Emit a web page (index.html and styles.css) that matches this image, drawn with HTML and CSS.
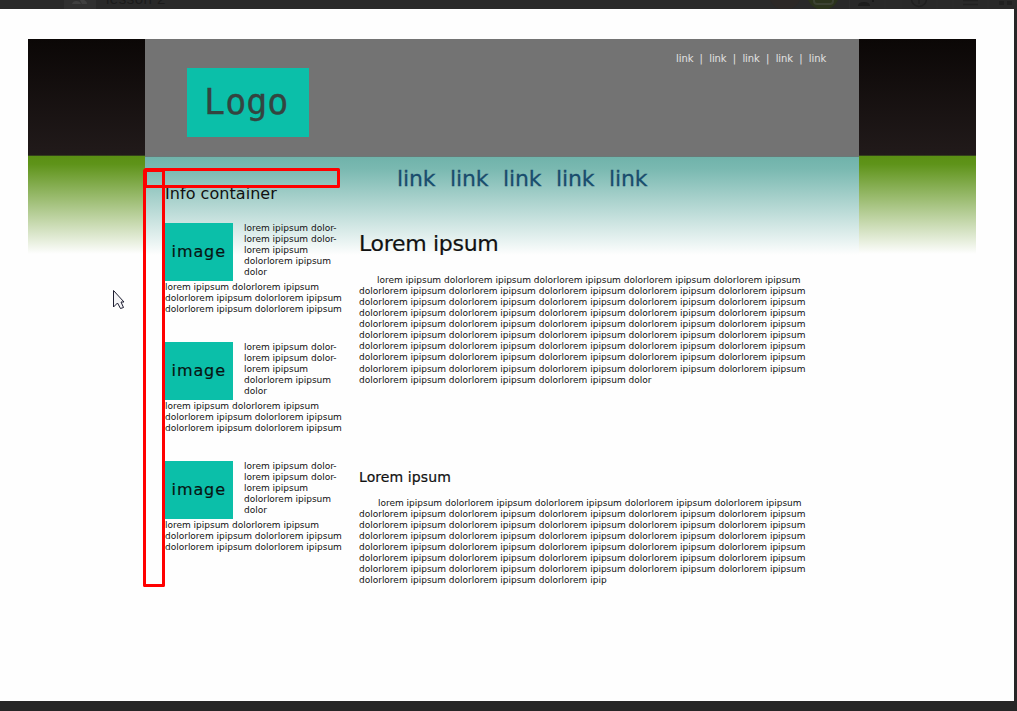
FILE: index.html
```
<!DOCTYPE html>
<html lang="en">
<head>
<meta charset="utf-8">
<title>lesson 2</title>
<link rel="stylesheet" href="styles.css">
</head>
<body>
<div class="backdrop">
  <svg class="toolbar" width="1017" height="9" viewBox="0 0 1017 9">
    <rect x="64" width="32" height="9" fill="#303030"/>
    <path d="M72 4q1-3 4-3 4 0 5 3zM80 0h4q3 1 3 4h-5z" fill="#404040"/>
    <text class="tab-title" x="106" y="4">lesson 2</text>
    <circle cx="785" cy="-6" r="16" fill="#2c2826"/>
    <circle cx="823" cy="-6" r="16" fill="#2b331c"/>
    <rect x="814" y="-4" width="19" height="8" rx="3" fill="none" stroke="#3c4232" stroke-width="2"/>
    <path d="M858 6q0-4 6-4t6 4zM872 0h2v2h-2z" fill="#1c1c1c"/>
    <circle cx="919" cy="-1" r="7.5" fill="none" stroke="#202020" stroke-width="1.5"/>
    <path d="M919 0v4M963 .5h15M963 4.500h15" stroke="#202020" stroke-width="1.5"/>
    <path d="M999 1h5v4h-5zM1007 1h5v4h-5z" fill="#202020"/>
    <path d="M849.500 0v9M885 0v9M901 0v9M937 0v9M953 0v9M988 0v9" stroke="#2d2d2d"/>
  </svg>
  <div class="sheet">
    <div class="page">
      <div class="container">
        <header class="header">
          <div class="logo">Logo</div>
          <nav class="top-links"><a>link</a><i>|</i><a>link</a><i>|</i><a>link</a><i>|</i><a>link</a><i>|</i><a>link</a></nav>
        </header>
        <div class="columns">
          <aside class="sidebar">
            <h3 class="info-title">Info container</h3>
            <section class="info">
              <div class="info-top"><div class="image">image</div><p>lorem ipipsum dolor-<br>lorem ipipsum dolor-<br>lorem ipipsum<br>dolorlorem ipipsum<br>dolor</p></div>
              <p>lorem ipipsum dolorlorem ipipsum<br>dolorlorem ipipsum dolorlorem ipipsum<br>dolorlorem ipipsum dolorlorem ipipsum</p>
            </section>
            <section class="info">
              <div class="info-top"><div class="image">image</div><p>lorem ipipsum dolor-<br>lorem ipipsum dolor-<br>lorem ipipsum<br>dolorlorem ipipsum<br>dolor</p></div>
              <p>lorem ipipsum dolorlorem ipipsum<br>dolorlorem ipipsum dolorlorem ipipsum<br>dolorlorem ipipsum dolorlorem ipipsum</p>
            </section>
            <section class="info">
              <div class="info-top"><div class="image">image</div><p>lorem ipipsum dolor-<br>lorem ipipsum dolor-<br>lorem ipipsum<br>dolorlorem ipipsum<br>dolor</p></div>
              <p>lorem ipipsum dolorlorem ipipsum<br>dolorlorem ipipsum dolorlorem ipipsum<br>dolorlorem ipipsum dolorlorem ipipsum</p>
            </section>
          </aside>
          <main class="main">
            <nav class="menu"><a>link</a><a>link</a><a>link</a><a>link</a><a>link</a></nav>
            <h1 class="title">Lorem ipsum</h1>
            <p class="body-text">lorem ipipsum dolorlorem ipipsum dolorlorem ipipsum dolorlorem ipipsum dolorlorem ipipsum<br>dolorlorem ipipsum dolorlorem ipipsum dolorlorem ipipsum dolorlorem ipipsum dolorlorem ipipsum<br>dolorlorem ipipsum dolorlorem ipipsum dolorlorem ipipsum dolorlorem ipipsum dolorlorem ipipsum<br>dolorlorem ipipsum dolorlorem ipipsum dolorlorem ipipsum dolorlorem ipipsum dolorlorem ipipsum<br>dolorlorem ipipsum dolorlorem ipipsum dolorlorem ipipsum dolorlorem ipipsum dolorlorem ipipsum<br>dolorlorem ipipsum dolorlorem ipipsum dolorlorem ipipsum dolorlorem ipipsum dolorlorem ipipsum<br>dolorlorem ipipsum dolorlorem ipipsum dolorlorem ipipsum dolorlorem ipipsum dolorlorem ipipsum<br>dolorlorem ipipsum dolorlorem ipipsum dolorlorem ipipsum dolorlorem ipipsum dolorlorem ipipsum<br>dolorlorem ipipsum dolorlorem ipipsum dolorlorem ipipsum dolorlorem ipipsum dolorlorem ipipsum<br>dolorlorem ipipsum dolorlorem ipipsum dolorlorem ipipsum dolor</p>
            <h2 class="subtitle">Lorem ipsum</h2>
            <p class="body-text second">lorem ipipsum dolorlorem ipipsum dolorlorem ipipsum dolorlorem ipipsum dolorlorem ipipsum<br>dolorlorem ipipsum dolorlorem ipipsum dolorlorem ipipsum dolorlorem ipipsum dolorlorem ipipsum<br>dolorlorem ipipsum dolorlorem ipipsum dolorlorem ipipsum dolorlorem ipipsum dolorlorem ipipsum<br>dolorlorem ipipsum dolorlorem ipipsum dolorlorem ipipsum dolorlorem ipipsum dolorlorem ipipsum<br>dolorlorem ipipsum dolorlorem ipipsum dolorlorem ipipsum dolorlorem ipipsum dolorlorem ipipsum<br>dolorlorem ipipsum dolorlorem ipipsum dolorlorem ipipsum dolorlorem ipipsum dolorlorem ipipsum<br>dolorlorem ipipsum dolorlorem ipipsum dolorlorem ipipsum dolorlorem ipipsum dolorlorem ipipsum<br>dolorlorem ipipsum dolorlorem ipipsum dolorlorem ipip</p>
          </main>
        </div>
      </div>
    </div>
  </div>
</div>
<svg class="annotations" width="1017" height="711" viewBox="0 0 1017 711">
  <g fill="none" stroke="#f00" stroke-width="3" stroke-linejoin="round">
    <rect x="145.500" y="169.500" width="193" height="17"/>
    <rect x="144.500" y="170.500" width="19" height="415"/>
  </g>
  <path d="M113.500 290.500V307l4-4 3 5.500 3-1-2.500-5.500h3z" fill="#f4f4f6" stroke="#1d1d30" stroke-width="1"/>
</svg>
</body>
</html>
```
FILE: styles.css
```
* { box-sizing: border-box; }
body {
  margin: 0;
  font-family: "DejaVu Sans", sans-serif;
  color: #111;
}
h1, h2, h3, p { margin: 0; font-weight: 400; white-space: nowrap; }
.backdrop {
  width: 1017px;
  height: 711px;
  overflow: hidden;
  background: #262626;
}
.toolbar { display: block; background: #292929; }
.tab-title {
  font: 15px "Liberation Sans", sans-serif;
  fill: #1b1b1b;
  letter-spacing: .5px;
}
.sheet {
  width: 1014px;
  height: 692px;
  padding: 30px 38px 0 28px;
  background: #fefefe;
}
.page {
  height: 640px;
  padding: 0 117px;
  background:
    linear-gradient(#0b0706, #211a1a 116px, #33401b 116px) 0 0 / 100% 118px no-repeat,
    linear-gradient(#5a8f14 0, #5e9319 8px, #fefefe 98px) 0 118px / 100% 100px no-repeat;
}
.container {
  height: 640px;
  background: #fefefe;
}
.page { background-size: 100% 117px, 100% 100px; background-position: 0 0, 0 117px; }
.header {
  display: flex;
  justify-content: space-between;
  height: 118px;
  padding: 29px 33px 0 42px;
  background: #737373;
  border-bottom: 1px solid #697876;
}
.logo {
  width: 121.500px;
  height: 69px;
  padding-right: 3px;
  line-height: 68px;
  text-align: center;
  background: #0bbfa9;
  color: #344440;
  font-family: "DejaVu Sans Mono", monospace;
  font-size: 35px;
  -webkit-text-stroke: .3px #344440;
}
.top-links {
  display: flex;
  height: 14px;
  margin-top: -16px;
  color: #e2e2e2;
  font-size: 10px;
  line-height: 14px;
  letter-spacing: -.1px;
}
.top-links a { width: 17.200px; }
.top-links i { width: 16px; font-style: normal; text-align: center; }
.columns {
  display: flex;
  height: 522px;
  padding-left: 20px;
  background: linear-gradient(#70b3aa 0, #7ab9b1 12px, #fefefe 98px);
}
.sidebar { width: 194px; padding-top: 27px; }
.info-title {
  height: 39px;
  font-size: 16px;
  line-height: 20px;
  letter-spacing: .05px;
}
.info {
  height: 119px;
  font-size: 9px;
  line-height: 11px;
  letter-spacing: -.01px;
}
.info-top { display: flex; height: 59px; gap: 11.500px; }
.image {
  width: 67.500px;
  height: 58px;
  background: #0bbfa9;
  color: #081312;
  font-size: 16px;
  line-height: 58px;
  letter-spacing: .9px;
  text-align: center;
  -webkit-text-stroke: .2px #081312;
}
.main { flex: 1; }
.menu {
  display: flex;
  height: 43px;
  padding-left: 38px;
  gap: 14px;
  color: #194d6d;
  font-size: 22px;
  line-height: 43px;
  letter-spacing: -.1px;
  -webkit-text-stroke: .3px #194d6d;
}
.menu a { width: 39px; }
.title {
  margin-top: 29px;
  font-size: 22px;
  line-height: 30px;
  letter-spacing: -.3px;
  -webkit-text-stroke: .2px #111;
}
.body-text {
  height: 111px;
  margin-top: 16px;
  font-size: 9px;
  line-height: 11.060px;
  letter-spacing: -.01px;
  text-indent: 18px;
}
.subtitle {
  margin-top: 81px;
  font-size: 14px;
  line-height: 20px;
  letter-spacing: .1px;
  -webkit-text-stroke: .2px #111;
}
.second { margin-top: 11px; text-indent: 19px; }
.annotations { position: absolute; left: 0; top: 0; }
```
